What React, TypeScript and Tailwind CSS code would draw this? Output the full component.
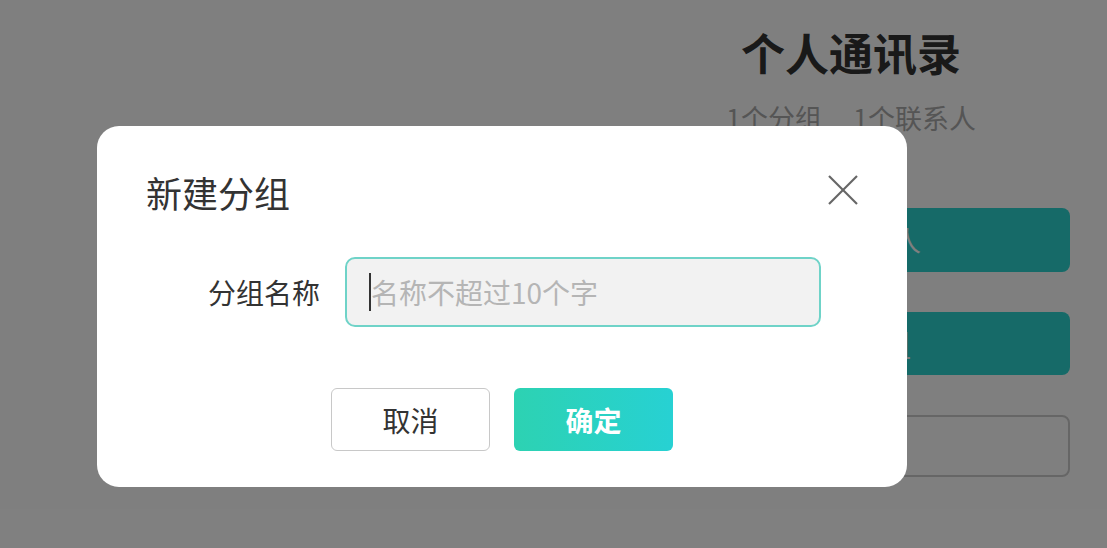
import React from "react";

export default function App() {
  const font = { fontFamily: '"Noto Sans CJK SC", "Noto Sans", sans-serif' };
  return (
    <div className="relative w-[1107px] h-[548px] overflow-hidden bg-white" style={font}>
      {/* underlying page */}
      <div className="flex justify-end pr-[37px]">
        <div className="w-[438px] flex flex-col items-center pt-[22px]">
          <div className="text-[44px] leading-[60px] font-bold text-[#333]">个人通讯录</div>
          <div className="mt-[18px] flex gap-[31px] text-[27px] leading-[36px] text-[#aaa]">
            <span>1个分组</span>
            <span>1个联系人</span>
          </div>
          <div className="mt-[72px] w-full flex flex-col gap-[40px]">
            <div className="h-[64px] rounded-[8px] bg-[#2cd4d0] flex items-center justify-center text-white text-[28px]">新建联系人</div>
            <div className="h-[63px] rounded-[8px] bg-[#2cd4d0] flex items-center justify-center text-white text-[30px]">新建分组</div>
            <div className="h-[62px] rounded-[8px] border-2 border-[#ccc] flex items-center justify-center text-[#333] text-[28px]">导入</div>
          </div>
        </div>
      </div>

      {/* overlay */}
      <div className="absolute inset-0 bg-black/50" />

      {/* modal */}
      <div className="absolute left-[97px] top-[126px] w-[810px] h-[361px] rounded-[22px] bg-white flex flex-col">
        <div className="flex items-center justify-between pl-[49px] pr-[48px] pt-[46px]">
          <div className="text-[36px] leading-[40px] text-[#333]">新建分组</div>
          <svg width="32" height="32" viewBox="0 0 32 32" className="mt-[-4px]">
            <line x1="2" y1="2" x2="30" y2="30" stroke="#666" strokeWidth="2.2" />
            <line x1="30" y1="2" x2="2" y2="30" stroke="#666" strokeWidth="2.2" />
          </svg>
        </div>
        <div className="flex items-center mt-[45px]">
          <div className="w-[223px] text-right text-[28px] leading-[40px] text-[#333]">分组名称</div>
          <div className="ml-[25px] w-[476px] h-[70px] rounded-[10px] border-2 border-[#6fd3c8] bg-[#f2f2f2] flex items-center pl-[22px]">
            <span className="w-[2px] h-[38px] bg-[#333]" />
            <span className="text-[28px] leading-[36px] text-[#b5b5b5]">名称不超过10个字</span>
          </div>
        </div>
        <div className="flex justify-center gap-[24px] mt-[61px]">
          <div className="w-[159px] h-[63px] rounded-[6px] border border-[#c8c8c8] flex items-center justify-center text-[28px] text-[#333]">取消</div>
          <div className="w-[159px] h-[63px] rounded-[6px] bg-gradient-to-r from-[#2dd2b2] to-[#27d1d3] flex items-center justify-center text-[28px] font-bold text-white">确定</div>
        </div>
      </div>
    </div>
  );
}
